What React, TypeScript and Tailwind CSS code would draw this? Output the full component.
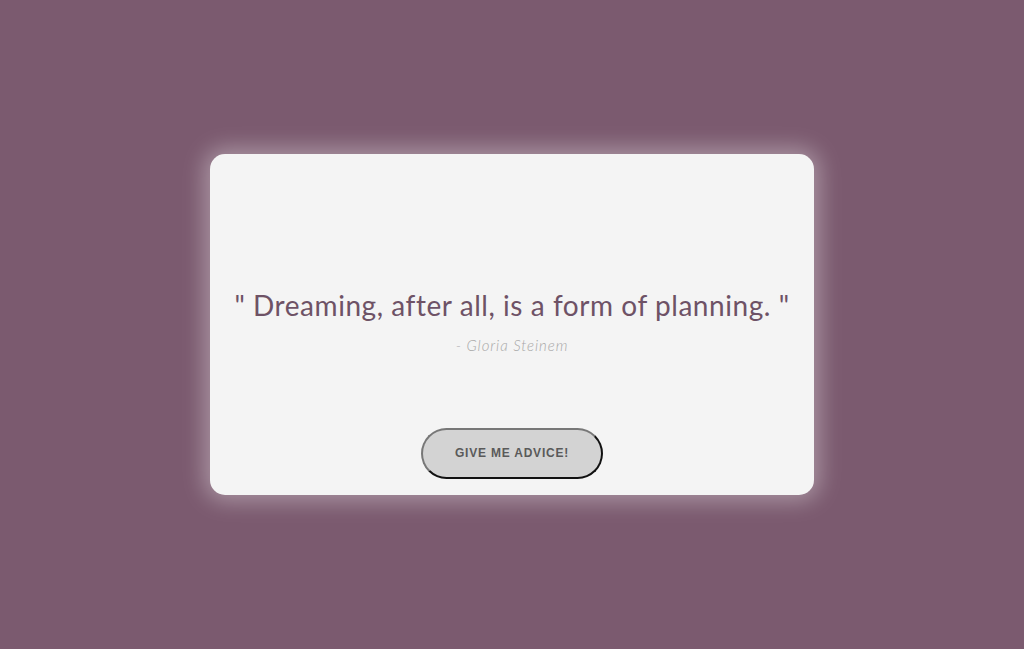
export default function App() {
  return (
    <div className="flex min-h-[649px] w-full items-center justify-center bg-[#7b5a6f]">
      <div className="flex h-[341px] w-[604px] flex-col items-center rounded-[15px] bg-[#f4f4f4] px-4 pt-[133px] pb-4 shadow-[0_0_22px_6px_rgba(255,255,255,0.35)]">
        <p className="text-center font-['Lato',sans-serif] text-[28px] leading-[36px] tracking-[0.55px] text-[#6e5266]">
          " Dreaming, after all, is a form of planning. "
        </p>
        <p className="mt-[12px] font-['Lato',sans-serif] text-[15px] leading-[20px] font-light tracking-[0.9px] italic text-[#a8a8a8]">
          - Gloria Steinem
        </p>
        <button
          type="button"
          className="mt-auto h-[51px] w-[182px] rounded-full border-2 border-t-[#777] border-l-[#777] border-r-[#111] border-b-[#111] bg-[#d3d3d3] pb-[2px] font-['Liberation_Sans',sans-serif] text-[12px] font-bold tracking-[0.8px] text-[#5a5a5a]"
        >
          GIVE ME ADVICE!
        </button>
      </div>
    </div>
  );
}
